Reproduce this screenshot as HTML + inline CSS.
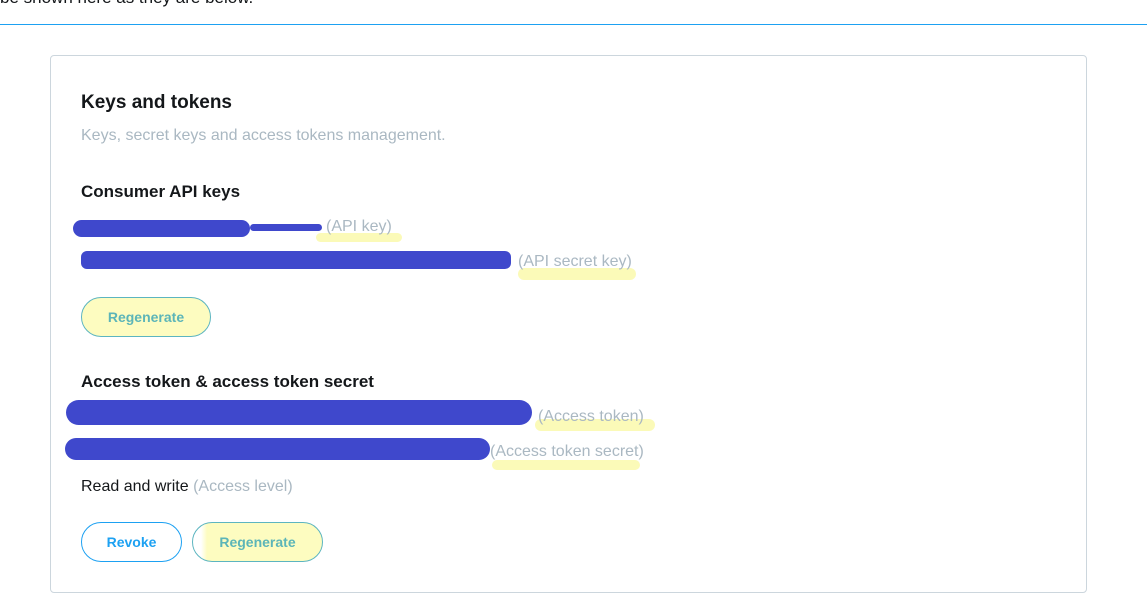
<!DOCTYPE html>
<html><head><meta charset="utf-8"><style>
body{margin:0;width:1147px;height:607px;overflow:hidden;background:#fff;font-family:"Liberation Sans",sans-serif;position:relative;color:#14171a}
.a{position:absolute;white-space:nowrap}
.g{color:#aab8c2}
.t{font-size:16px}
.b{font-weight:bold}
.sc{position:absolute;background:#3f48cc;border-radius:10px}
.hl{position:absolute;background:#fbfab0;border-radius:6px;opacity:.9}
.btn{position:absolute;height:38px;border:1px solid #1da1f2;border-radius:20px;font-size:14px;font-weight:bold;color:#1da1f2;text-align:center;line-height:38px;box-sizing:content-box}
</style></head><body>
<div class="a t" style="left:0;top:-12px;font-size:17px">be shown here as they are below.</div>
<div class="a" style="left:0;top:24px;width:1147px;height:1px;background:#1da1f2"></div>
<div class="a" style="left:50px;top:55px;width:1035px;height:536px;border:1px solid #ccd6dd;border-radius:4px"></div>
<div class="a b" style="left:81px;top:92px;font-size:19px">Keys and tokens</div>
<div class="a t g" style="left:81px;top:127px">Keys, secret keys and access tokens management.</div>
<div class="a b" style="left:81px;top:182px;font-size:17px">Consumer API keys</div>
<div class="hl" style="left:316px;top:233px;width:86px;height:9px"></div>
<div class="a t g" style="left:326px;top:218px">(API key)</div>
<div class="sc" style="left:73px;top:220px;width:177px;height:17px"></div>
<div class="sc" style="left:250px;top:224px;width:72px;height:7px"></div>
<div class="hl" style="left:518px;top:268px;width:118px;height:12px"></div>
<div class="a t g" style="left:518px;top:253px">(API secret key)</div>
<div class="sc" style="left:81px;top:251px;width:430px;height:18px;border-radius:6px"></div>
<div class="btn" style="left:81px;top:297px;width:128px;background:#fdfcc0;color:#5cb5b8;border-color:#5cb5c0">Regenerate</div>
<div class="a b" style="left:81px;top:372px;font-size:17px">Access token &amp; access token secret</div>
<div class="hl" style="left:535px;top:419px;width:120px;height:12px"></div>
<div class="a t g" style="left:538px;top:408px">(Access token)</div>
<div class="sc" style="left:66px;top:400px;width:466px;height:25px;border-radius:13px"></div>
<div class="hl" style="left:492px;top:460px;width:148px;height:10px"></div>
<div class="a t g" style="left:490px;top:443px">(Access token secret)</div>
<div class="sc" style="left:65px;top:438px;width:425px;height:22px;border-radius:12px"></div>
<div class="a t" style="left:81px;top:478px">Read and write <span class="g">(Access level)</span></div>
<div class="btn" style="left:81px;top:522px;width:99px">Revoke</div>
<div class="btn" style="left:192px;top:522px;width:129px;background:linear-gradient(90deg,#fff 0,#fff 8px,#fdfcc0 14px);color:#5cb5b8;border-color:#5cb5c0">Regenerate</div>
</body></html>
